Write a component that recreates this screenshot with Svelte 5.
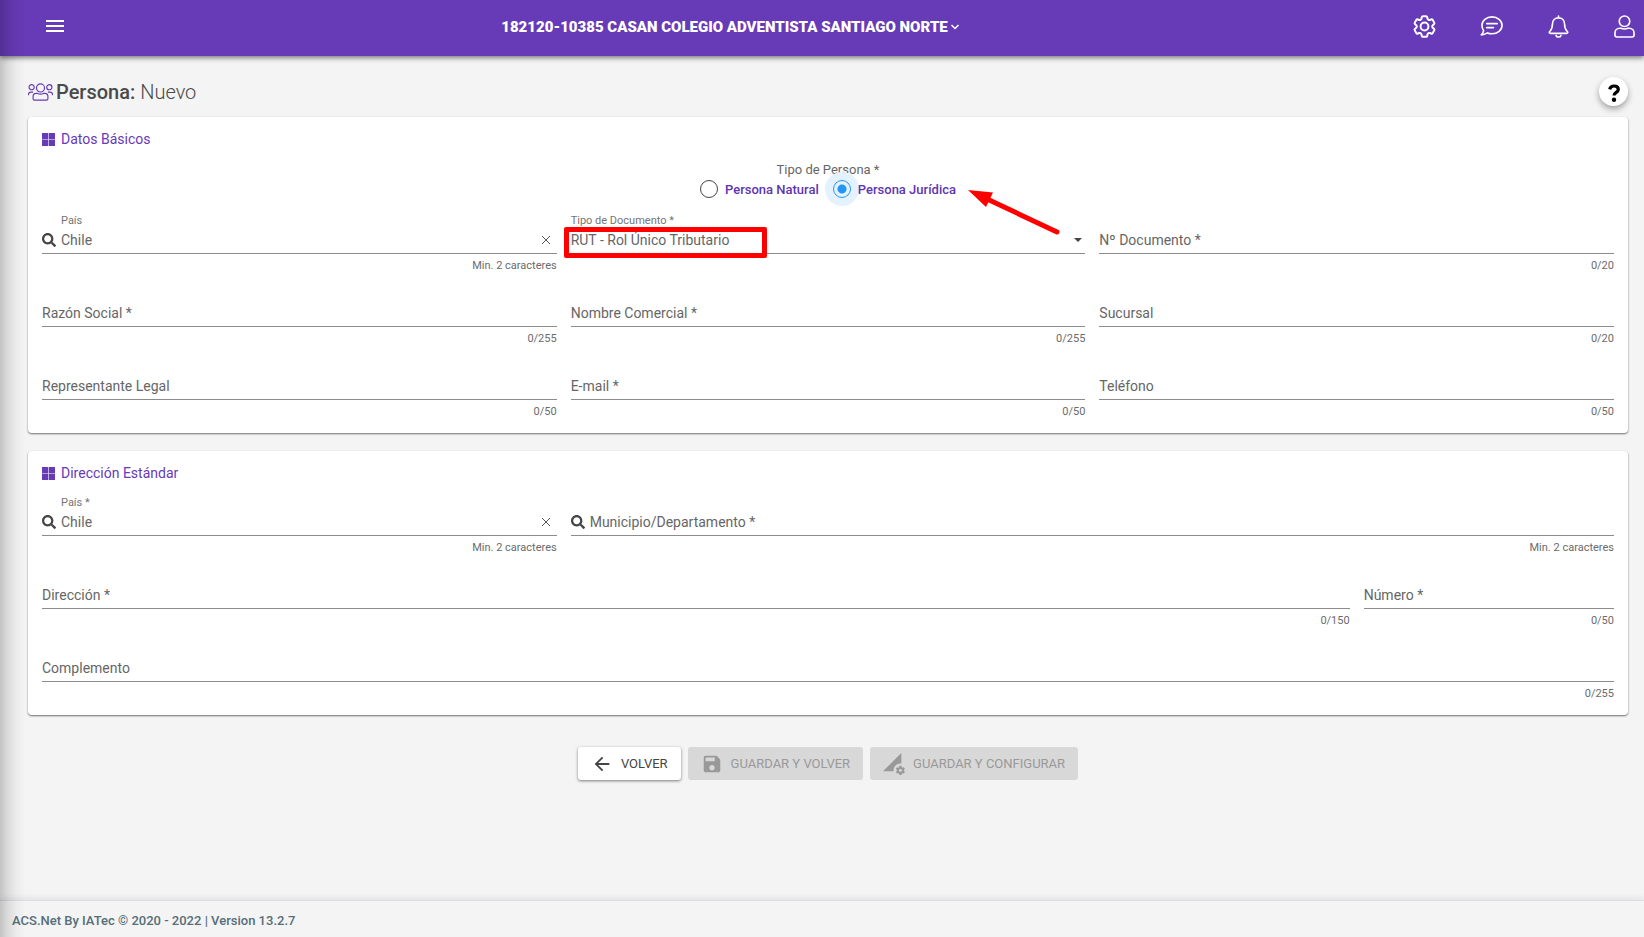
<script>
  let kind = $state('juridica');
  let country = $state('Chile');
  let addressCountry = $state('Chile');

  const basics = [
    { id: 'razon', label: 'Razón Social *', hint: '0/255', max: 255 },
    { id: 'comercial', label: 'Nombre Comercial *', hint: '0/255', max: 255 },
    { id: 'sucursal', label: 'Sucursal', hint: '0/20', max: 20 },
    { id: 'representante', label: 'Representante Legal', hint: '0/50', max: 50 },
    { id: 'email', label: 'E-mail *', hint: '0/50', max: 50 },
    { id: 'telefono', label: 'Teléfono', hint: '0/50', max: 50 }
  ];
</script>

{#snippet tiles()}
  <svg class="tiles" viewBox="0 0 13 13" aria-hidden="true"><path d="M0 0h6.200v6.200H0zM6.800 0H13v6.200H6.800zM0 6.800h6.200V13H0zM6.800 6.800H13V13H6.800z" /></svg>
{/snippet}

{#snippet lens()}
  <svg class="lens" viewBox="0 0 512 512" aria-hidden="true"><path d="M505 442.700 405.300 343c-4.500-4.500-10.600-7-17-7H372c27.600-35.300 44-79.700 44-128C416 93.100 322.900 0 208 0S0 93.100 0 208s93.100 208 208 208c48.300 0 92.700-16.400 128-44v16.300c0 6.400 2.500 12.500 7 17l99.700 99.700c9.400 9.400 24.600 9.400 33.900 0l28.300-28.300c9.400-9.400 9.400-24.600.1-34zM208 336c-70.700 0-128-57.200-128-128 0-70.700 57.200-128 128-128 70.700 0 128 57.200 128 128 0 70.700-57.200 128-128 128z" /></svg>
{/snippet}

{#snippet cross()}
  <svg viewBox="0 0 10 10" aria-hidden="true"><path d="M1 1l8 8M9 1L1 9" /></svg>
{/snippet}

{#snippet textField(id, label, hint, max, span)}
  <div class="field span{span}">
    <label class="rest" for={id}>{label}</label>
    <div class="control"><input {id} type="text" maxlength={max} /></div>
    <span class="hint">{hint}</span>
  </div>
{/snippet}

<div class="page">
  <header>
    <button class="menu" aria-label="Menú">
      <svg viewBox="0 0 24 24"><path d="M3 18h18v-2H3v2zm0-5h18v-2H3v2zm0-7v2h18V6H3z" /></svg>
    </button>
    <button class="entity">
      182120-10385 CASAN COLEGIO ADVENTISTA SANTIAGO NORTE
      <svg viewBox="0 0 10 8" aria-hidden="true"><path d="M1.500 2 5 5.500 8.500 2" /></svg>
    </button>
    <nav>
      <button aria-label="Configuración">
        <svg viewBox="2 2 20 20"><path d="M9.594 3.940c.09-.542.56-.94 1.110-.94h2.593c.55 0 1.020.398 1.110.94l.213 1.281c.063.374.313.686.645.87.074.04.147.083.22.127.325.196.72.257 1.075.124l1.217-.456a1.125 1.125 0 0 1 1.370.49l1.296 2.247a1.125 1.125 0 0 1-.26 1.431l-1.003.827c-.293.241-.438.613-.43.992a7.723 7.723 0 0 1 0 .255c-.008.378.137.75.43.991l1.004.827c.424.35.534.955.26 1.430l-1.298 2.247a1.125 1.125 0 0 1-1.369.491l-1.217-.456c-.355-.133-.75-.072-1.076.124a6.470 6.470 0 0 1-.22.128c-.331.183-.581.495-.644.869l-.213 1.281c-.09.543-.56.94-1.110.94h-2.594c-.55 0-1.019-.398-1.110-.94l-.213-1.281c-.062-.374-.312-.686-.644-.87a6.520 6.520 0 0 1-.22-.127c-.325-.196-.72-.257-1.076-.124l-1.217.456a1.125 1.125 0 0 1-1.369-.49l-1.297-2.247a1.125 1.125 0 0 1 .26-1.431l1.004-.827c.292-.24.437-.613.43-.991a6.932 6.932 0 0 1 0-.255c.007-.38-.138-.751-.43-.992l-1.004-.827a1.125 1.125 0 0 1-.26-1.430l1.297-2.247a1.125 1.125 0 0 1 1.370-.491l1.216.456c.356.133.751.072 1.076-.124.072-.044.146-.086.22-.128.332-.183.582-.495.644-.869l.214-1.280Z" /><circle cx="12" cy="12" r="3.400" /></svg>
      </button>
      <button aria-label="Mensajes">
        <svg viewBox="0 0 24 24"><path d="M12.500 2c5.800 0 10.500 3.800 10.500 8.800s-4.700 8.800-10.500 8.800c-1.700 0-3.300-.3-4.700-.9-1.500 1-3.900 2-6.500 2 1.300-1.200 2.200-2.800 2.500-4.400C2.600 14.700 2 13 2 10.800 2 5.800 6.700 2 12.500 2zM7 9h11M7 13.200h7" /></svg>
      </button>
      <button aria-label="Notificaciones">
        <svg viewBox="0 0 24 24"><path d="M12 1v2M12 3c-3.700 0-6.300 2.700-6.300 6.500 0 5.200-1.500 6.300-2.900 7.700-.9.900-.4 2 .9 2h16.600c1.300 0 1.800-1.100.9-2-1.400-1.400-2.900-2.500-2.900-7.700 0-3.800-2.600-6.500-6.300-6.500zM9.400 21.300c.4 1.200 1.400 1.700 2.600 1.700s2.200-.5 2.600-1.700" /></svg>
      </button>
      <button aria-label="Usuario">
        <svg class="user" viewBox="1 0 22 24"><circle cx="12" cy="6.500" r="5.500" /><path d="M7 13.800h1.300c2.400 1 5 1 7.400 0H17c2.800 0 5 2.200 5 5v2.200c0 1.200-.8 2-2 2H4c-1.200 0-2-.8-2-2v-2.200c0-2.800 2.200-5 5-5z" /></svg>
      </button>
    </nav>
  </header>

  <main>
    <div class="heading">
      <svg class="people" viewBox="0 0 26 18" aria-hidden="true"><circle cx="13" cy="4.800" r="4.200" /><circle cx="3.800" cy="4" r="2.700" /><circle cx="22.200" cy="4" r="2.700" /><path d="M8.500 10.500h1.300c2 .8 4.400.8 6.400 0h1.300c1.900 0 3.200 1.400 3.200 3.200v2.300c0 .8-.6 1.400-1.400 1.400H6.700c-.8 0-1.400-.6-1.400-1.400v-2.300c0-1.800 1.300-3.200 3.200-3.200zM.5 12.300v-.6c0-1.500 1-2.500 2.500-2.500h2.300M25.500 12.300v-.6c0-1.500-1-2.500-2.500-2.500h-2.300" /></svg>
      <h1>Persona: <span>Nuevo</span></h1>
      <button class="help" aria-label="Ayuda">
        <svg viewBox="0 0 12 18"><path d="M1.700 5.400C2.200 3.200 3.700 2 6 2c2.500 0 4.300 1.300 4.300 3.500C10.300 8.400 6 8.400 6 11.600" /><circle cx="6" cy="15.800" r="2.200" /></svg>
      </button>
    </div>

    <section class="card">
      <h2>{@render tiles()}Datos Básicos</h2>

      <div class="kind" role="radiogroup" aria-labelledby="kind-title">
        <div class="kind-title" id="kind-title">Tipo de Persona *</div>
        <div class="options">
          <label><input type="radio" name="kind" value="natural" bind:group={kind} />Persona Natural</label>
          <label>
            <input type="radio" name="kind" value="juridica" bind:group={kind} />Persona Jurídica
            <svg class="arrow" viewBox="0 0 94 46" aria-hidden="true"><path class="head" d="M0 0 25 2.500 18 17z" /><path class="shaft" d="M18 8.500 89 42" /></svg>
          </label>
        </div>
      </div>

      <div class="grid">
        <div class="field span4 search">
          <label class="float" for="pais">País</label>
          <div class="control">{@render lens()}<input id="pais" type="text" bind:value={country} /><button class="clear" aria-label="Borrar" onclick={() => (country = '')}>{@render cross()}</button></div>
          <span class="hint">Min. 2 caracteres</span>
        </div>
        <div class="field span4 marked">
          <label class="float" for="documento">Tipo de Documento *</label>
          <div class="control">
            <select id="documento"><option>RUT - Rol Único Tributario</option></select>
            <svg class="caret" viewBox="0 0 8 4" aria-hidden="true"><path d="M0 0h8L4 4z" /></svg>
          </div>
        </div>
        {@render textField('numero-doc', 'Nº Documento *', '0/20', 20, 4)}
        {#each basics as f (f.id)}
          {@render textField(f.id, f.label, f.hint, f.max, 4)}
        {/each}
      </div>
    </section>

    <section class="card">
      <h2>{@render tiles()}Dirección Estándar</h2>
      <div class="grid">
        <div class="field span4 search">
          <label class="float" for="pais-dir">País *</label>
          <div class="control">{@render lens()}<input id="pais-dir" type="text" bind:value={addressCountry} /><button class="clear" aria-label="Borrar" onclick={() => (addressCountry = '')}>{@render cross()}</button></div>
          <span class="hint">Min. 2 caracteres</span>
        </div>
        <div class="field span8 search">
          <label class="rest" for="municipio">Municipio/Departamento *</label>
          <div class="control">{@render lens()}<input id="municipio" type="text" /></div>
          <span class="hint">Min. 2 caracteres</span>
        </div>
        {@render textField('direccion', 'Dirección *', '0/150', 150, 10)}
        {@render textField('numero', 'Número *', '0/50', 50, 2)}
        {@render textField('complemento', 'Complemento', '0/255', 255, 12)}
      </div>
    </section>

    <div class="actions">
      <button class="back"><svg viewBox="0 0 24 24" aria-hidden="true"><path d="M20 11H7.830l5.590-5.590L12 4l-8 8 8 8 1.410-1.410L7.830 13H20v-2z" /></svg>VOLVER</button>
      <button disabled><svg viewBox="0 0 24 24" aria-hidden="true"><path d="M17 3H5c-1.110 0-2 .9-2 2v14c0 1.100.89 2 2 2h14c1.100 0 2-.9 2-2V7l-4-4zm-5 16c-1.660 0-3-1.340-3-3s1.340-3 3-3 3 1.340 3 3-1.340 3-3 3zm3-10H5V5h10v4z" /></svg>GUARDAR Y VOLVER</button>
      <button disabled><svg viewBox="0 0 24 24" aria-hidden="true"><path d="M18.990 11.500c.34 0 .67.03 1 .07L20 0 0 20h11.560c-.04-.33-.07-.66-.07-1 0-4.140 3.360-7.500 7.500-7.500zm3.710 7.990c.02-.16.04-.32.04-.49 0-.17-.01-.33-.04-.49l1.060-.83c.09-.08.12-.21.06-.32l-1-1.730c-.06-.11-.19-.15-.31-.11l-1.240.5c-.26-.2-.54-.37-.85-.49l-.19-1.320c-.01-.12-.12-.21-.24-.21h-2c-.12 0-.23.09-.25.21l-.19 1.320c-.3.13-.59.29-.85.49l-1.240-.5c-.11-.04-.24 0-.31.11l-1 1.730c-.06.11-.04.24.06.32l1.060.83c-.02.16-.03.32-.03.49 0 .17.01.33.03.49l-1.060.83c-.09.08-.12.21-.06.32l1 1.730c.06.11.19.15.31.11l1.240-.5c.26.2.54.37.85.49l.19 1.320c.02.12.12.21.25.21h2c.12 0 .23-.09.25-.21l.19-1.320c.3-.13.59-.29.84-.49l1.250.5c.11.04.24 0 .31-.11l1-1.730c.06-.11.03-.24-.06-.32l-1.070-.83zm-3.710 1.010c-.83 0-1.500-.67-1.500-1.500s.67-1.500 1.500-1.500 1.500.67 1.500 1.500-.67 1.500-1.500 1.500z" /></svg>GUARDAR Y CONFIGURAR</button>
    </div>
  </main>

  <footer>ACS.Net By IATec © 2020 - 2022 | Version 13.2.7</footer>
</div>

<style>
  :global(body) {
    margin: 0;
    background: #f4f4f4;
  }
  .page,
  .page :global(*) {
    box-sizing: border-box;
  }
  .page {
    position: relative;
    display: flex;
    flex-direction: column;
    min-height: 100vh;
    font-family: Roboto, 'Liberation Sans', sans-serif;
    font-size: 14px;
    color: #4a4a4a;
    overflow: hidden;
  }
  .page::before {
    content: '';
    position: absolute;
    inset: 0 auto 0 0;
    width: 26px;
    z-index: 2;
    pointer-events: none;
    background: linear-gradient(90deg, rgba(0, 0, 0, 0.2), rgba(0, 0, 0, 0.1) 30%, rgba(0, 0, 0, 0.03) 65%, transparent);
  }
  svg {
    display: block;
    flex: none;
  }
  button {
    font: inherit;
    color: inherit;
    border: 0;
    padding: 0;
    background: none;
  }

  header {
    display: flex;
    align-items: center;
    height: 56px;
    padding-left: 42px;
    background: #673ab7;
    color: #fff;
    box-shadow: 0 2px 5px rgba(0, 0, 0, 0.5);
    z-index: 1;
  }
  .menu {
    padding-bottom: 4px;
  }
  .menu svg {
    width: 26px;
    height: 24px;
    fill: #fff;
  }
  .entity {
    flex: 1;
    display: flex;
    justify-content: center;
    align-items: center;
    gap: 2px;
    padding: 0 20px 2px 0;
    font-size: 15px;
    font-weight: 900;
    white-space: nowrap;
  }
  .entity svg {
    width: 10px;
    height: 8px;
    fill: none;
    stroke: #fff;
    stroke-width: 1.500;
  }
  nav {
    display: flex;
    gap: 44px;
    padding: 0 9px 4px 0;
  }
  nav svg {
    width: 23px;
    height: 23px;
    fill: none;
    stroke: #fff;
    stroke-width: 1.700;
    stroke-linejoin: round;
    stroke-linecap: round;
  }
  nav .user {
    width: 21px;
  }

  main {
    flex: 1;
    padding: 20px 16px 24px 28px;
  }
  .heading {
    display: flex;
    align-items: center;
    gap: 3px;
    height: 31px;
    margin-bottom: 10px;
  }
  .people {
    width: 25px;
    height: 18px;
    fill: none;
    stroke: #673ab7;
    stroke-width: 1.200;
  }
  h1 {
    flex: 1;
    margin: 0;
    font-size: 20px;
    line-height: 24px;
    font-weight: 500;
  }
  h1 span {
    font-weight: 300;
  }
  .help {
    display: grid;
    place-items: center;
    width: 29px;
    height: 29px;
    border-radius: 50%;
    background: #fff;
    box-shadow: 0 3px 6px rgba(0, 0, 0, 0.35);
  }
  .help svg {
    width: 12px;
    height: 18px;
    margin-top: 3px;
    fill: none;
    stroke: #000;
    stroke-width: 3.200;
  }
  .help circle {
    fill: #000;
    stroke: none;
  }

  .card {
    padding: 14px 14px 13px;
    margin-bottom: 18px;
    border-radius: 4px;
    background: #fff;
    box-shadow: 0 1px 2px rgba(0, 0, 0, 0.55);
  }
  h2 {
    display: flex;
    align-items: center;
    gap: 6px;
    margin: 0 0 14px;
    font-size: 14px;
    line-height: 16px;
    font-weight: 400;
    color: #673ab7;
  }
  .tiles {
    width: 13px;
    height: 13px;
    fill: #673ab7;
  }

  .kind {
    display: flex;
    flex-direction: column;
    align-items: center;
    margin-bottom: 13px;
  }
  .kind-title {
    font-size: 13px;
    line-height: 17px;
    color: #666;
  }
  .options {
    display: flex;
    gap: 14px;
  }
  .options label {
    position: relative;
    display: flex;
    align-items: center;
    gap: 7px;
    height: 22px;
    font-size: 13px;
    font-weight: 500;
    color: #5e35b1;
  }
  input[type='radio'] {
    appearance: none;
    width: 18px;
    height: 18px;
    margin: 0;
    border: 1px solid #444;
    border-radius: 50%;
    background: #fff;
  }
  input[type='radio']:checked {
    border-color: #2196f3;
    background: radial-gradient(circle, #2196f3 4px, #e3f2fd 5px);
    box-shadow: 0 0 0 8px #e3f2fd;
  }
  .arrow {
    position: absolute;
    left: calc(100% + 12px);
    top: 12px;
    width: 94px;
    height: 46px;
  }
  .head {
    fill: #f00;
  }
  .shaft {
    fill: none;
    stroke: #f00;
    stroke-width: 5;
    stroke-linecap: round;
  }

  .grid {
    display: grid;
    grid-template-columns: repeat(12, minmax(0, 1fr));
    gap: 12px 14px;
  }
  .span2 { grid-column: span 2; }
  .span4 { grid-column: span 4; }
  .span8 { grid-column: span 8; }
  .span10 { grid-column: span 10; }
  .span12 { grid-column: span 12; }

  .field {
    position: relative;
    display: grid;
    grid-template-columns: minmax(0, 1fr);
    grid-template-rows: 14px 27px 20px;
  }
  .float {
    grid-area: 1 / 1;
    font-size: 11px;
    line-height: 16px;
    color: #757575;
  }
  .rest {
    grid-area: 2 / 1;
    z-index: 1;
    font-size: 14px;
    line-height: 26px;
    color: #666;
    pointer-events: none;
  }
  .search .float,
  .search .rest {
    padding-left: 19px;
  }
  .control {
    grid-area: 2 / 1;
    display: flex;
    align-items: center;
    gap: 5px;
    border-bottom: 1px solid #8c8c8c;
  }
  .control input,
  select {
    flex: 1;
    min-width: 0;
    height: 26px;
    padding: 0;
    border: 0;
    outline: 0;
    background: none;
    font: inherit;
    color: #666;
  }
  select {
    appearance: none;
  }
  .lens {
    width: 14px;
    height: 14px;
    fill: #444;
  }
  .clear {
    padding-right: 6px;
  }
  .clear svg {
    width: 10px;
    height: 10px;
    fill: none;
    stroke: #555;
    stroke-width: 1;
  }
  .caret {
    width: 8px;
    height: 4px;
    margin-right: 3px;
    fill: #444;
  }
  .hint {
    grid-area: 3 / 1;
    justify-self: end;
    padding-top: 4px;
    font-size: 11px;
    line-height: 16px;
    color: #6b6b6b;
  }
  .marked::after {
    content: '';
    box-sizing: border-box;
    position: absolute;
    left: -7px;
    top: 14px;
    width: 203px;
    height: 31px;
    border: 5px solid #f00;
    border-radius: 2px;
    z-index: 2;
    pointer-events: none;
  }

  .actions {
    display: flex;
    justify-content: center;
    gap: 7px;
    padding-top: 14px;
  }
  .actions button {
    display: flex;
    align-items: center;
    gap: 8px;
    height: 33px;
    padding: 0 13px;
    border-radius: 3px;
    font-size: 13px;
    color: #999;
    background: #d8d8d8;
  }
  .actions .back {
    color: #444;
    background: #fff;
    box-shadow: 0 1px 3px rgba(0, 0, 0, 0.5);
  }
  .actions svg {
    width: 22px;
    height: 22px;
    fill: currentColor;
  }

  footer {
    padding: 12px 12px 8px;
    border-top: 1px solid #dcdce6;
    box-shadow: 0 -2px 6px rgba(0, 0, 0, 0.08);
    font-size: 13px;
    line-height: 16px;
    font-weight: 500;
    color: #546e7a;
  }
</style>
